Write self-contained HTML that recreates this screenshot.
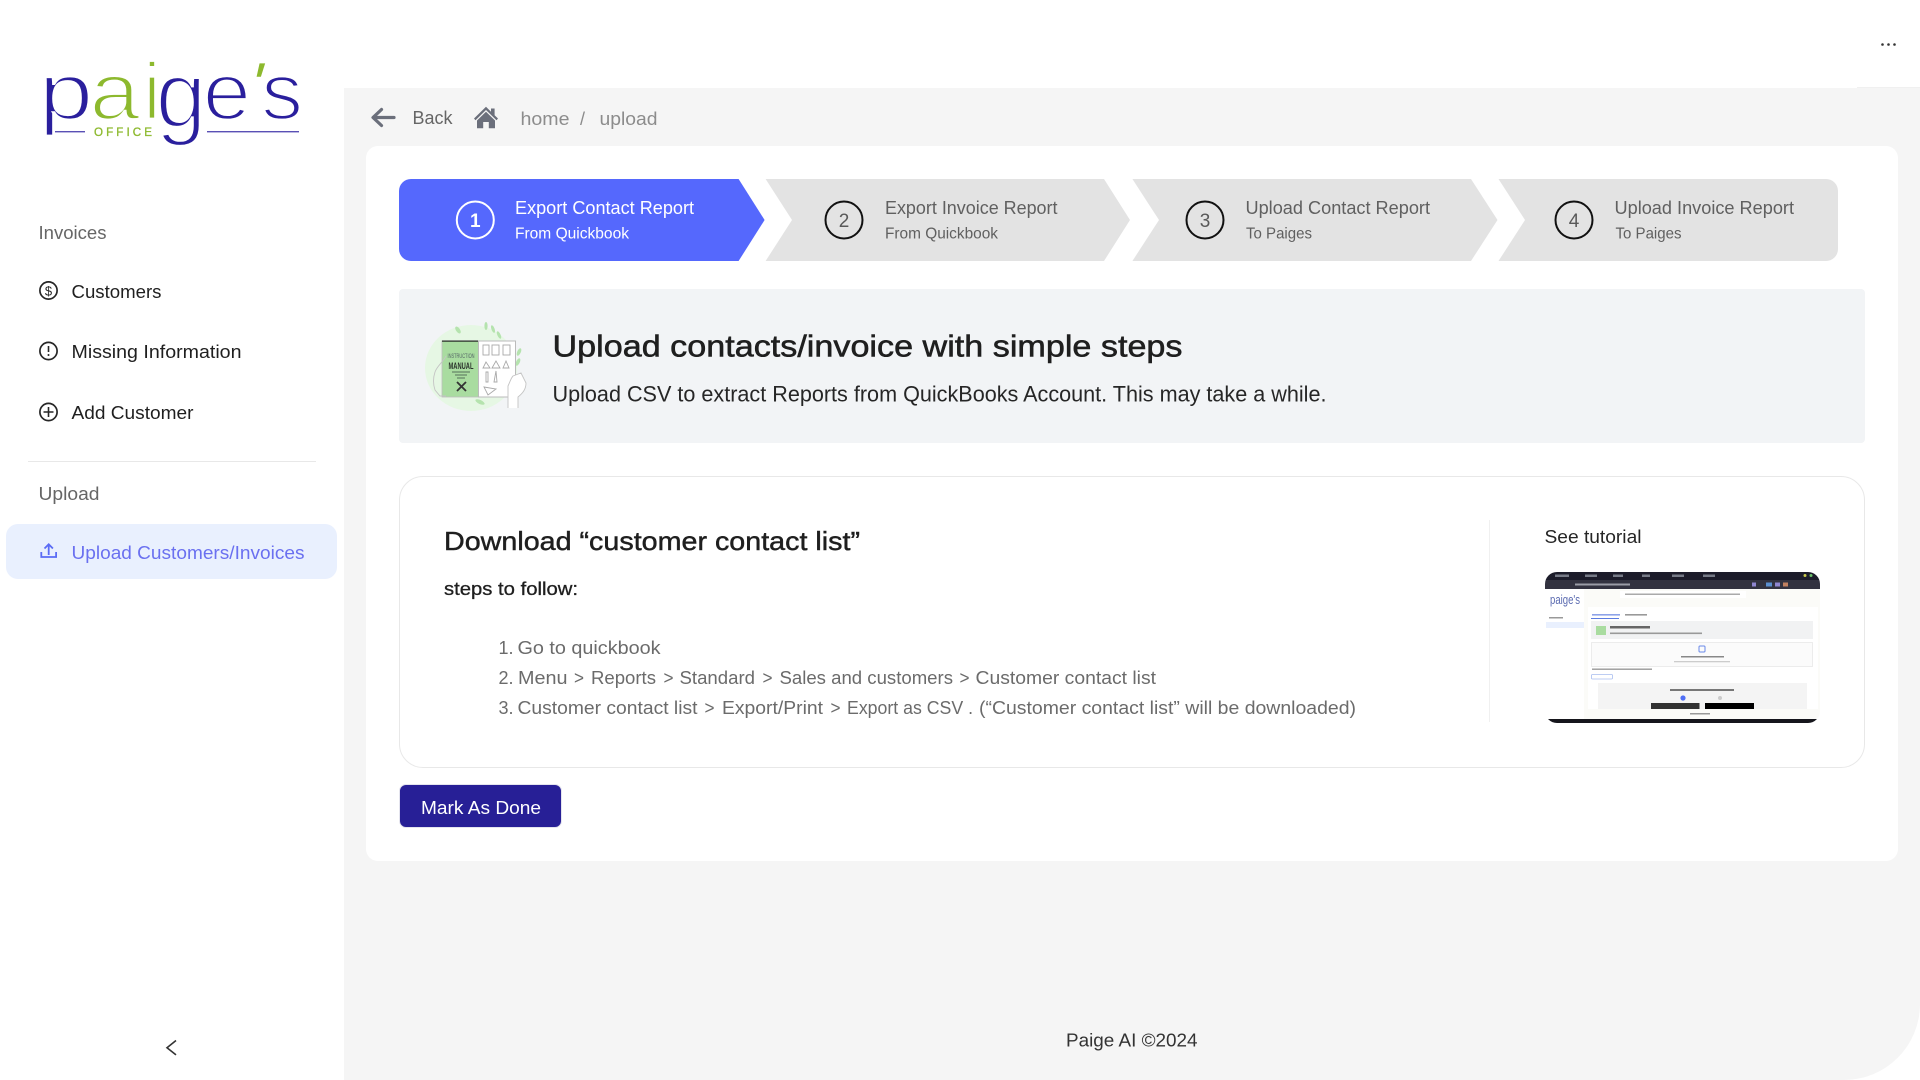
<!DOCTYPE html>
<html lang="en">
<head>
<meta charset="utf-8">
<title>Paige's Office - Upload</title>
<style>
html,body{margin:0;padding:0;width:1920px;height:1080px;overflow:hidden;background:#fff;font-family:"Liberation Sans",sans-serif}
.box{position:absolute;box-sizing:border-box}
#main{left:344px;top:88px;width:1576px;height:992px;background:#f5f5f5;border-bottom-right-radius:76px}
#topline{left:1857px;top:87px;width:63px;height:1px;background:#f0f0f0}
#active{left:6px;top:524px;width:331px;height:55px;background:#e9f0fe;border-radius:12px}
#divider{left:28px;top:461px;width:288px;height:1px;background:#e8e8e8}
#card{left:366px;top:146px;width:1532px;height:715px;background:#fff;border-radius:12px}
#info{left:399px;top:289px;width:1466px;height:154px;background:#f2f4f6;border-radius:4px}
#panel{left:399px;top:476px;width:1466px;height:292px;background:#fff;border:1px solid #e8e8e8;border-radius:24px}
#vline{left:1489px;top:520px;width:1px;height:202px;background:#f0f0f0}
#btn{left:399px;top:784px;width:162.5px;height:44px;background:#271f96;border-radius:7px;border:1px solid #e4e4ee}
svg#o{position:absolute;left:0;top:0}
text{font-family:"Liberation Sans",sans-serif}
.nav{font-size:18px;fill:#1f1f1f}
.grp{font-size:18px;fill:#666}
.st{font-size:18px;fill:#606060}
.ss{font-size:16px;fill:#606060}
.li{font-size:18px;fill:#6b6b6b}
.ic{fill:none;stroke:#262626;stroke-width:1.7}
.lg{font-size:81px;stroke:#fff;stroke-width:2.7px}
</style>
</head>
<body>
<div class="box" id="main"></div>
<div class="box" id="topline"></div>
<div class="box" id="active"></div>
<div class="box" id="divider"></div>
<div class="box" id="card"></div>
<div class="box" id="info"></div>
<div class="box" id="panel"></div>
<div class="box" id="vline"></div>
<div class="box" id="btn"></div>

<svg id="o" width="1920" height="1080" viewBox="0 0 1920 1080" xmlns="http://www.w3.org/2000/svg">
<defs>
<clipPath id="th"><rect x="1545" y="572" width="275" height="151" rx="12"/></clipPath>
<filter id="soft" x="0" y="0" width="100%" height="100%"><feGaussianBlur stdDeviation=".35"/></filter>
</defs>

<!-- logo -->
<text class="lg" fill="#2a1f9d" transform="translate(38.5,119) scale(1.22,1)">p</text>
<text class="lg" fill="#8db92e" transform="translate(89.5,119) scale(1.12,1)">a</text>
<text class="lg" fill="#8db92e" transform="translate(143,119)">i</text>
<text class="lg" fill="#2a1f9d" transform="translate(155.5,127) scale(1.13,1.16)">g</text>
<text class="lg" fill="#2a1f9d" transform="translate(202.8,119) scale(1.07,1)">e</text>
<text font-size="62" fill="#8db92e" transform="translate(245,106) skewX(-15)">'</text>
<text class="lg" fill="#2a1f9d" transform="translate(261.3,119) scale(1.03,1)">s</text>
<rect x="55" y="131" width="30" height="1.4" fill="#5a50b5"/>
<rect x="207" y="131" width="92" height="1.4" fill="#5a50b5"/>
<text x="94" y="136" font-size="11.6" fill="#8db92e" stroke="#8db92e" stroke-width=".3" textLength="58" lengthAdjust="spacing">OFFICE</text>

<!-- dots -->
<circle cx="1882.5" cy="44.5" r="1.3" fill="#333"/><circle cx="1888.5" cy="44.5" r="1.3" fill="#333"/><circle cx="1894.5" cy="44.5" r="1.3" fill="#333"/>

<!-- sidebar -->
<text class="grp" x="38.5" y="239" textLength="68" lengthAdjust="spacingAndGlyphs">Invoices</text>
<circle class="ic" cx="48.5" cy="290.5" r="8.6"/>
<text x="48.5" y="295.5" font-size="13" text-anchor="middle" fill="#262626">$</text>
<text class="nav" x="71.5" y="298" textLength="90" lengthAdjust="spacingAndGlyphs">Customers</text>
<circle class="ic" cx="48.5" cy="351" r="8.6"/>
<path d="M48.5 346v6" stroke="#262626" stroke-width="1.6" fill="none"/><circle cx="48.5" cy="355" r="1" fill="#262626"/>
<text class="nav" x="71.5" y="358" textLength="170" lengthAdjust="spacingAndGlyphs">Missing Information</text>
<circle class="ic" cx="48.5" cy="412" r="8.6"/>
<path d="M48.5 407v10M43.5 412h10" stroke="#262626" stroke-width="1.6" fill="none"/>
<text class="nav" x="71.5" y="419" textLength="122" lengthAdjust="spacingAndGlyphs">Add Customer</text>
<text class="grp" x="38.5" y="500" textLength="61" lengthAdjust="spacingAndGlyphs">Upload</text>
<path d="M48.7 555V544.5M44.5 548.5l4.2-4.2 4.2 4.2M41.3 552v5h14.8v-5" fill="none" stroke="#5b6cf5" stroke-width="1.8"/>
<text x="71.5" y="559" font-size="18" fill="#6a70f0" textLength="233" lengthAdjust="spacingAndGlyphs">Upload Customers/Invoices</text>
<path d="M176 1040.5l-9 7.2 9 7.2" fill="none" stroke="#333" stroke-width="1.6"/>

<!-- breadcrumb -->
<path d="M394 117.5H373.5M381.5 109.5l-8.5 8 8.5 8" fill="none" stroke="#6b6f7b" stroke-width="3.2" stroke-linecap="round" stroke-linejoin="round"/>
<text x="412.5" y="124" font-size="18" fill="#666" textLength="40" lengthAdjust="spacingAndGlyphs">Back</text>
<path fill="#6b6f7b" d="M486 106.7L474 118.5l1.5 1.7L486 110l10.5 10.2 1.5-1.7-3.4-3.3V108.5h-3.6v3.2zM477 120.5l9-8.7 9 8.7v7.8h-6.2v-6.3h-5.6v6.3H477z"/>
<text x="520.5" y="125" font-size="18" fill="#8c8c8c" textLength="49" lengthAdjust="spacingAndGlyphs">home</text>
<text x="580" y="125" font-size="18" fill="#8c8c8c">/</text>
<text x="599.5" y="125" font-size="18" fill="#8c8c8c" textLength="58" lengthAdjust="spacingAndGlyphs">upload</text>

<!-- stepper -->
<path fill="#5568fd" d="M411 179H738.6L764.6 220 738.6 261H411a12 12 0 0 1-12-12V191a12 12 0 0 1 12-12z"/>
<path fill="#e3e3e3" d="M765.6 179H1104L1130 220 1104 261H765.6L792 220z"/>
<path fill="#e3e3e3" d="M1132.4 179H1471L1497.5 220 1471 261H1132.4L1159 220z"/>
<path fill="#e3e3e3" d="M1498.5 179H1826a12 12 0 0 1 12 12V249a12 12 0 0 1-12 12H1498.5L1525 220z"/>

<circle cx="475.3" cy="220" r="18.5" fill="none" stroke="#fff" stroke-width="2"/>
<text x="475.3" y="227" font-size="19" font-weight="bold" text-anchor="middle" fill="#fff">1</text>
<text x="515" y="214" font-size="18" fill="#fff" textLength="179" lengthAdjust="spacingAndGlyphs">Export Contact Report</text>
<text x="515" y="238.7" font-size="16" fill="#fff" textLength="114" lengthAdjust="spacingAndGlyphs">From Quickbook</text>

<circle cx="844" cy="220" r="18.5" fill="none" stroke="#111" stroke-width="2"/>
<text x="844" y="227" font-size="19" text-anchor="middle" fill="#595959">2</text>
<text class="st" x="885" y="214" textLength="172.5" lengthAdjust="spacingAndGlyphs">Export Invoice Report</text>
<text class="ss" x="885" y="238.7" textLength="113" lengthAdjust="spacingAndGlyphs">From Quickbook</text>

<circle cx="1205" cy="220" r="18.5" fill="none" stroke="#111" stroke-width="2"/>
<text x="1205" y="227" font-size="19" text-anchor="middle" fill="#595959">3</text>
<text class="st" x="1245.5" y="214" textLength="184.5" lengthAdjust="spacingAndGlyphs">Upload Contact Report</text>
<text class="ss" x="1246" y="238.7" textLength="66" lengthAdjust="spacingAndGlyphs">To Paiges</text>

<circle cx="1574" cy="220" r="18.5" fill="none" stroke="#111" stroke-width="2"/>
<text x="1574" y="227" font-size="19" text-anchor="middle" fill="#595959">4</text>
<text class="st" x="1614.5" y="214" textLength="179.5" lengthAdjust="spacingAndGlyphs">Upload Invoice Report</text>
<text class="ss" x="1615.5" y="238.7" textLength="66" lengthAdjust="spacingAndGlyphs">To Paiges</text>

<!-- illustration -->
<ellipse cx="471" cy="368" rx="46" ry="43" fill="#e6f7e4"/>
<g fill="#b5e3ae">
<ellipse cx="458" cy="330" rx="2" ry="4" transform="rotate(-35 458 330)"/>
<ellipse cx="486" cy="326" rx="1.6" ry="4"/><ellipse cx="493" cy="329" rx="1.6" ry="4" transform="rotate(-20 493 329)"/><ellipse cx="499" cy="335" rx="1.6" ry="4" transform="rotate(-25 499 335)"/>
<ellipse cx="519" cy="352" rx="1.8" ry="4" transform="rotate(25 519 352)"/><ellipse cx="518" cy="362" rx="1.8" ry="4" transform="rotate(25 518 362)"/>
<ellipse cx="480" cy="402" rx="5" ry="2" transform="rotate(25 480 402)"/>
</g>
<rect x="442" y="341" width="36.5" height="56" fill="#a9dca0" stroke="#bdbdbd" stroke-width=".8"/>
<rect x="442" y="340.5" width="36.5" height="1.2" fill="#222"/>
<rect x="478.5" y="341" width="37" height="56" fill="#fff" stroke="#bbb" stroke-width="1"/>
<text x="461" y="358" font-size="6" text-anchor="middle" fill="#566" textLength="27" lengthAdjust="spacingAndGlyphs">INSTRUCTION</text>
<text x="461" y="369" font-size="9" font-weight="bold" text-anchor="middle" fill="#2b332b" textLength="25" lengthAdjust="spacingAndGlyphs">MANUAL</text>
<path d="M452 372h18M455 375h12M457 378h8" stroke="#55705a" stroke-width="1"/>
<path d="M457 382l9 9M466 382l-9 9" stroke="#333" stroke-width="1.8"/>
<g fill="none" stroke="#a9a9a9" stroke-width=".9">
<rect x="483" y="345" width="6" height="10"/><rect x="492" y="345" width="7" height="10"/><rect x="503" y="345" width="7" height="10"/>
<path d="M486 362l-3 6h7zM496 361l-4 7h8zM506 361l-3 7h6zM486 372v10h2v-10zM496 371l-2 11h3zM484 387l12 2-8 6z"/>
</g>
<path d="M446 356c-3 6-9 10-11 16-2 6-2 12 0 18l5 6h6" fill="none" stroke="#c4c4c4" stroke-width=".9"/>
<path d="M508 408v-22c2-4 3-8 5-10l8-3 5 10c0 6-3 10-8 14v11" fill="#fff" stroke="#c4c4c4" stroke-width=".9"/>

<!-- info text -->
<text x="552.5" y="356.5" font-size="30.5" fill="#1f1f1f" stroke="#1f1f1f" stroke-width=".55" textLength="630" lengthAdjust="spacingAndGlyphs">Upload contacts/invoice with simple steps</text>
<text x="552.5" y="401.7" font-size="22" fill="#262626" textLength="774" lengthAdjust="spacingAndGlyphs">Upload CSV to extract Reports from QuickBooks Account. This may take a while.</text>

<!-- steps -->
<text x="444" y="550" font-size="26" fill="#1f1f1f" stroke="#1f1f1f" stroke-width=".45" textLength="416" lengthAdjust="spacingAndGlyphs">Download “customer contact list”</text>
<text x="444" y="595" font-size="18" fill="#1f1f1f" stroke="#1f1f1f" stroke-width=".3" textLength="134" lengthAdjust="spacingAndGlyphs">steps to follow:</text>

<text class="li" x="498.5" y="654">1.</text>
<text class="li" x="517.5" y="654" textLength="143" lengthAdjust="spacingAndGlyphs">Go to quickbook</text>

<text class="li" x="498.5" y="684">2.</text>
<text class="li" x="518" y="684" textLength="49.5" lengthAdjust="spacingAndGlyphs">Menu</text>
<text class="li" x="574" y="684" textLength="10" lengthAdjust="spacingAndGlyphs">&gt;</text>
<text class="li" x="591" y="684" textLength="65" lengthAdjust="spacingAndGlyphs">Reports</text>
<text class="li" x="663.5" y="684" textLength="10" lengthAdjust="spacingAndGlyphs">&gt;</text>
<text class="li" x="679.5" y="684" textLength="75.5" lengthAdjust="spacingAndGlyphs">Standard</text>
<text class="li" x="762.5" y="684" textLength="10" lengthAdjust="spacingAndGlyphs">&gt;</text>
<text class="li" x="779.5" y="684" textLength="173.5" lengthAdjust="spacingAndGlyphs">Sales and customers</text>
<text class="li" x="959.5" y="684" textLength="10" lengthAdjust="spacingAndGlyphs">&gt;</text>
<text class="li" x="975.5" y="684" textLength="180.5" lengthAdjust="spacingAndGlyphs">Customer contact list</text>

<text class="li" x="498.5" y="714">3.</text>
<text class="li" x="517.5" y="714" textLength="180" lengthAdjust="spacingAndGlyphs">Customer contact list</text>
<text class="li" x="704.5" y="714" textLength="10" lengthAdjust="spacingAndGlyphs">&gt;</text>
<text class="li" x="722" y="714" textLength="101" lengthAdjust="spacingAndGlyphs">Export/Print</text>
<text class="li" x="830.5" y="714" textLength="10" lengthAdjust="spacingAndGlyphs">&gt;</text>
<text class="li" x="847" y="714" textLength="126" lengthAdjust="spacingAndGlyphs">Export as CSV .</text>
<text class="li" x="979" y="714" textLength="377" lengthAdjust="spacingAndGlyphs">(“Customer contact list” will be downloaded)</text>

<text x="421" y="814" font-size="18" fill="#fff" textLength="120" lengthAdjust="spacingAndGlyphs">Mark As Done</text>

<!-- tutorial -->
<text x="1544.5" y="543" font-size="18" fill="#262626" textLength="97" lengthAdjust="spacingAndGlyphs">See tutorial</text>
<g clip-path="url(#th)"><g filter="url(#soft)">
<rect x="1545" y="572" width="275" height="151" fill="#fff"/>
<rect x="1545" y="572" width="275" height="8" fill="#1e1f2b"/>
<rect x="1545" y="580" width="275" height="9" fill="#30323f"/>
<g fill="#767a86"><rect x="1555" y="574.5" width="14" height="2.5"/><rect x="1585" y="574.5" width="12" height="2.5"/><rect x="1613" y="574.5" width="10" height="2.5"/><rect x="1642" y="574.5" width="8" height="2.5"/><rect x="1672" y="574.5" width="12" height="2.5"/><rect x="1703" y="574.5" width="12" height="2.5"/></g>
<rect x="1575" y="583.5" width="55" height="2" fill="#9a9ca6"/>
<g fill="#8f86d0"><rect x="1752" y="582.5" width="4" height="4"/><rect x="1766" y="582.5" width="6" height="4" fill="#5a8fd0"/><rect x="1775" y="582.5" width="5" height="4"/><rect x="1783" y="582.5" width="5" height="4" fill="#c08060"/></g>
<circle cx="1805" cy="575.5" r="1.5" fill="#c8c84a"/><circle cx="1811" cy="575.5" r="1.5" fill="#6ac06a"/>
<rect x="1584" y="589" width="236" height="130" fill="#fbfbf8"/>
<rect x="1620" y="591" width="126" height="7" fill="#fff"/>
<rect x="1625" y="593.5" width="115" height="1.5" fill="#aaa"/>
<text x="1550" y="604" font-size="13" fill="#5a6ab0" textLength="30" lengthAdjust="spacingAndGlyphs">paige's</text>
<rect x="1546" y="622" width="38" height="6" fill="#e9f0fe"/>
<rect x="1549" y="617" width="14" height="1.5" fill="#999"/>
<rect x="1588" y="607" width="230" height="102" fill="#fff"/>
<rect x="1592" y="614" width="28" height="1.6" fill="#8ea3e8"/><rect x="1625" y="614" width="22" height="1.6" fill="#999"/>
<rect x="1591" y="618" width="28" height="1" fill="#5b7be0"/>
<rect x="1591" y="621" width="222" height="18" fill="#f1f2f3"/>
<rect x="1596" y="626" width="10" height="9" fill="#a9dca0"/>
<rect x="1610" y="626" width="40" height="2.5" fill="#666"/>
<rect x="1610" y="632.5" width="92" height="1.6" fill="#999"/>
<rect x="1591.5" y="642.5" width="221" height="24" fill="#fbfbfb" stroke="#e6e6e6" stroke-width=".7"/>
<rect x="1699" y="646" width="6" height="6" rx="1" fill="none" stroke="#6a8ae8"/>
<rect x="1681" y="656" width="43" height="1.5" fill="#888"/><rect x="1674" y="661" width="56" height="1.3" fill="#ccc"/>
<rect x="1592" y="668.5" width="60" height="1.4" fill="#999"/>
<rect x="1591.5" y="674.5" width="21" height="4.5" rx="1" fill="#fff" stroke="#a8bdf0" stroke-width=".8"/>
<rect x="1598" y="683" width="209" height="26" fill="#f4f4f4"/>
<rect x="1670" y="689" width="64" height="2" fill="#777"/>
<circle cx="1683" cy="698" r="2.6" fill="#4f6ef5"/><circle cx="1720" cy="698" r="2" fill="#ccc"/>
<rect x="1651" y="703" width="48.5" height="6" fill="#333"/>
<rect x="1705" y="703" width="49" height="6" fill="#000"/>
<rect x="1690" y="713" width="20" height="1.5" fill="#999"/>
<rect x="1545" y="719" width="275" height="4" fill="#17181d"/>
</g></g>

<!-- footer -->
<text x="1066" y="1046.7" font-size="18" fill="#333" textLength="131.5" lengthAdjust="spacingAndGlyphs">Paige AI ©2024</text>
</svg>
</body>
</html>
